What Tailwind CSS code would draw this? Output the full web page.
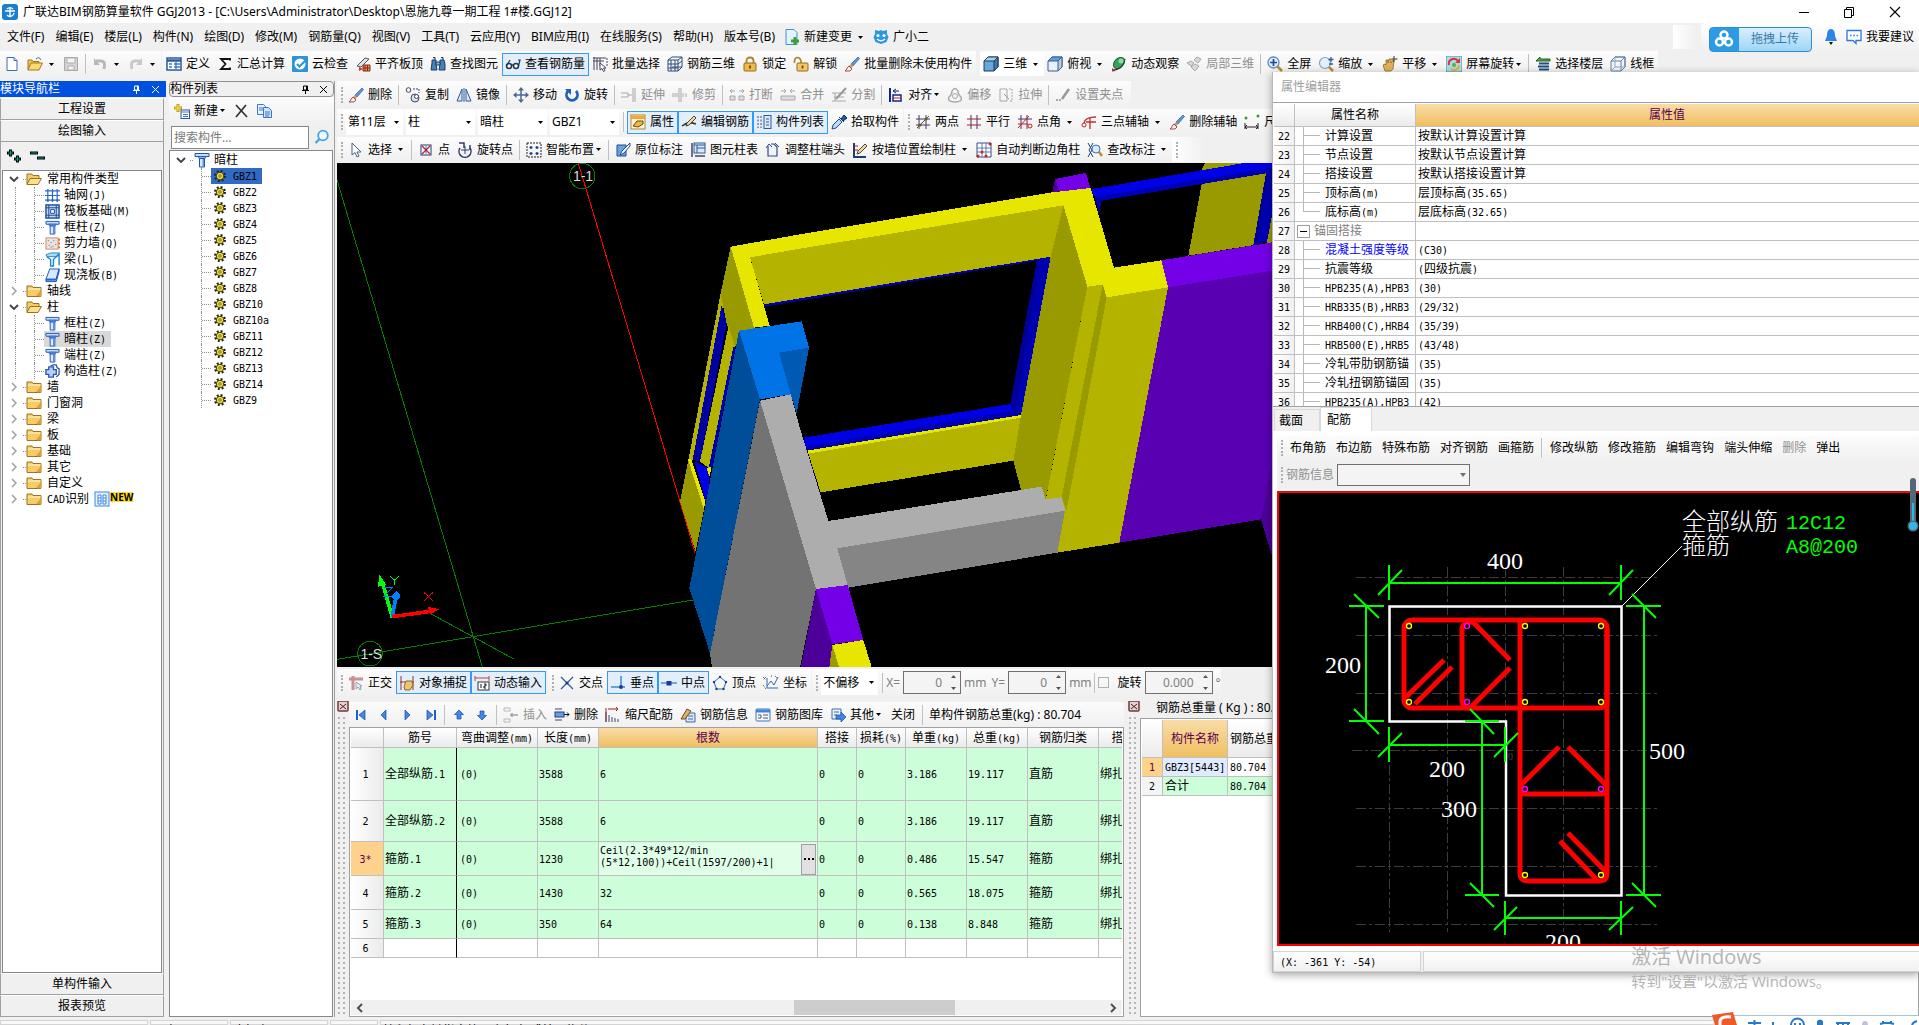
<!DOCTYPE html>
<html lang="zh-CN">
<head>
<meta charset="utf-8">
<title>广联达BIM钢筋算量软件 GGJ2013</title>
<script src="https://cdn.jsdelivr.net/npm/@tailwindcss/browser@4"></script>
</head>
<body class="h-screen overflow-hidden bg-[#f0f0f0] font-[family-name:'Noto_Sans','Noto_Sans_CJK_SC',sans-serif] text-xs text-black">
<div class="relative flex h-full w-full flex-col overflow-hidden">

  <!-- title bar -->
  <header class="flex h-[23px] shrink-0 items-center bg-white pl-[2px]">
    <svg class="size-4 shrink-0" viewBox="0 0 16 16"><rect width="16" height="16" rx="3" fill="#1a7fd0"/><path d="M8 3v10M3 7h10M5 5a4 4 0 0 1 6 0M5 11a4 4 0 0 0 7-2" fill="none" stroke="#fff" stroke-width="1.4"/></svg>
    <h1 class="ml-[5px] whitespace-nowrap">广联达BIM钢筋算量软件 GGJ2013 - [C:\Users\Administrator\Desktop\恩施九尊一期工程 1#楼.GGJ12]</h1>
    <div class="ml-auto flex h-full items-center">
      <button aria-label="最小化" class="grid w-[45px] place-items-center"><svg class="size-3" viewBox="0 0 12 12"><path d="M1 6.5h10" stroke="#000"/></svg></button>
      <button aria-label="还原" class="grid w-[45px] place-items-center"><svg class="size-3" viewBox="0 0 12 12" fill="none" stroke="#000"><path d="M1.5 3.5h7v8h-7zM3.500 3.500v-2h7v8h-2"/></svg></button>
      <button aria-label="关闭" class="grid w-[48px] place-items-center"><svg class="size-3" viewBox="0 0 12 12"><path d="M1 1l10 10M11 1L1 11" stroke="#000" stroke-width="1.100"/></svg></button>
    </div>
  </header>

  <!-- menu -->
  <nav class="flex h-7 shrink-0 items-center whitespace-nowrap pl-[2px]">
    <div id="menu" class="flex items-center gap-px"></div>
    <div class="ml-auto flex h-full items-center">
      <div class="mr-[4px] h-6 w-6 bg-linear-to-r from-white to-[#f0f0f0]"></div>
      <div class="flex h-full items-center rounded-l-sm bg-linear-to-b from-white to-[#f0f0f0] pl-2 pr-[5px]">
        <button class="relative z-10 mt-1 flex h-[25px] w-[103px] items-center rounded-sm border border-[#2f8fd0] bg-linear-to-b from-[#d8effc] to-[#9fd5f7] text-[#3a78a8]">
          <span class="grid h-full w-[29px] place-items-center bg-[#2a9be4]"><svg class="size-5" viewBox="0 0 20 20" fill="none" stroke="#fff" stroke-width="2.500"><circle cx="10" cy="6" r="3.500"/><circle cx="5.500" cy="13" r="3.500"/><circle cx="14.500" cy="13" r="3.500"/></svg></span>
          <span class="flex-1 text-center">拖拽上传</span>
        </button>
        <svg class="ml-[11px] h-[18px] w-4" viewBox="0 0 16 18"><path d="M8 1C4.500 1 4 5 4 8l-2 5h12l-2-5c0-3-.5-7-4-7z" fill="#2a86e8"/><path d="M6 14h4l-2 3z" fill="#111"/></svg>
        <svg class="ml-[7px] size-4" viewBox="0 0 16 16"><path d="M1 1.500h14v10h-5v3l-3-3H1z" fill="#fff" stroke="#2a78d8" stroke-width="1.300"/><path d="M4 6.500h1.500M7.300 6.500h1.500M10.600 6.500h1.500" stroke="#2a78d8" stroke-width="1.500"/></svg>
        <a href="#" class="ml-1">我要建议</a>
      </div>
    </div>
  </nav>

  <!-- main toolbar -->
  <div class="mb-1 flex h-[26px] shrink-0 items-center whitespace-nowrap">
    <div id="tbFile" class="flex h-full items-center bg-linear-to-b from-[#fcfcfc] to-[#f0f0f0] pl-px"></div>
    <div id="tbMain" class="ml-px flex h-full items-center bg-linear-to-b from-[#fcfcfc] to-[#f0f0f0] pl-px"></div>
    <div id="tbView" class="ml-1 flex h-full items-center bg-linear-to-b from-[#fcfcfc] to-[#f0f0f0]"></div>
  </div>

  <main class="flex min-h-0 flex-1 pb-[3px]">

    <!-- module navigation -->
    <aside class="song mr-[2px] flex w-[164px] shrink-0 flex-col">
      <div class="flex h-4 w-[166px] items-center bg-[#0050e0] pr-[6px] text-white">
        <h2>模块导航栏</h2>
        <svg class="ml-auto size-[9px]" viewBox="0 0 9 9"><path d="M2.500 1h4v4h-4zM1 5.500h7M4.500 5.500v3.500M5.500 1v4" fill="none" stroke="#fff"/></svg>
        <svg class="ml-[10px] size-[9px]" viewBox="0 0 9 9"><path d="M1 1l7 7M8 1l-7 7" stroke="#fff"/></svg>
      </div>
      <button class="mt-px h-[22px] border border-[#a0a0a0] border-t-white">工程设置</button>
      <button class="h-[22px] border border-[#a0a0a0] border-t-white">绘图输入</button>
      <div class="flex min-h-0 flex-1 flex-col border-x border-[#a0a0a0] px-px">
        <div class="flex h-7 shrink-0 items-center gap-2 pl-1">
          <button aria-label="展开"><svg class="size-4" viewBox="0 0 16 16"><path d="M1 5h7M4.500 1.500v7M8 11h7M11.500 7.500v7" stroke="#000" stroke-width="3"/><path d="M2 5h5M4.500 2.500v5M9 11h5M11.500 8.500v5" stroke="#0a9a8a"/></svg></button>
          <button aria-label="折叠"><svg class="size-4" viewBox="0 0 16 16"><path d="M0 5h8M7 10h8" stroke="#000" stroke-width="3"/><path d="M1 5h6M8 10h6" stroke="#0a9a8a"/></svg></button>
        </div>
        <ul id="navTree" class="min-h-0 flex-1 overflow-hidden border border-[#828790] bg-white"></ul>
      </div>
      <button class="h-[22px] shrink-0 border border-[#a0a0a0] border-t-white">单构件输入</button>
      <button class="h-[22px] shrink-0 border border-[#a0a0a0] border-t-white">报表预览</button>
    </aside>

    <!-- component list -->
    <aside class="song mr-[2px] flex w-[169px] shrink-0 flex-col border-r border-[#a0a0a0] pl-[3px]">
      <div class="flex h-4 shrink-0 items-center rounded-sm border border-[#909090] pr-[5px]">
        <h2>构件列表</h2>
        <svg class="ml-auto size-[9px]" viewBox="0 0 9 9"><path d="M2.500 1h4v4h-4zM1 5.500h7M4.500 5.500v3.500M5.500 1v4" fill="none" stroke="#000"/></svg>
        <svg class="ml-[9px] size-[9px]" viewBox="0 0 9 9"><path d="M1 1l7 7M8 1l-7 7" stroke="#000"/></svg>
      </div>
      <div class="flex h-[27px] shrink-0 items-center bg-linear-to-b from-[#fcfcfc] to-[#f0f0f0] pl-[2px]" id="tbList"></div>
      <div class="flex h-[26px] shrink-0 items-center pl-[2px]">
        <input aria-label="搜索构件" placeholder="搜索构件…" class="h-[23px] w-[138px] border border-[#828790] bg-white px-[2px] placeholder:text-[#7a7a7a]">
        <button aria-label="搜索" class="ml-[5px]"><svg class="size-4" viewBox="0 0 16 16"><circle cx="9" cy="6.500" r="4.800" fill="#eef8ff" stroke="#4aa3df" stroke-width="1.800"/><path d="M5.500 10L1.500 14" stroke="#4aa3df" stroke-width="2.400"/></svg></button>
      </div>
      <ul id="listTree" class="mr-px min-h-0 flex-1 overflow-hidden border border-[#828790] bg-white pt-px"></ul>
    </aside>

    <section class="flex min-w-0 flex-1 flex-col">
      <div class="flex h-[27px] shrink-0 items-center whitespace-nowrap">
        <div id="tbEdit" class="flex h-full items-center bg-linear-to-b from-[#fcfcfc] to-[#f0f0f0] pr-1"></div>
      </div>
      <div class="flex h-7 shrink-0 items-center whitespace-nowrap">
        <div class="flex h-[26px] items-center bg-linear-to-b from-[#fcfcfc] to-[#f0f0f0]">
          <div id="combos" class="flex items-center"></div>
          <div id="tbPanels" class="flex items-center"></div>
        </div>
        <div id="tbAxis" class="ml-px flex h-[26px] items-center bg-linear-to-b from-[#fcfcfc] to-[#f0f0f0]"></div>
      </div>
      <div class="flex h-[27px] shrink-0 items-center whitespace-nowrap">
        <div id="tbDraw" class="flex h-[25px] items-center bg-linear-to-b from-[#fcfcfc] to-[#f0f0f0]"></div>
        <div id="tbEmpty" class="flex h-[25px] w-8 items-center bg-linear-to-r from-white to-[#f0f0f0]"></div>
      </div>

      <!-- 3D view -->
      <div class="min-h-0 flex-1 bg-black">
        <svg class="h-full w-[935px]" viewBox="0 0 2805 1512" preserveAspectRatio="xMinYMin meet" shape-rendering="crispEdges">
          <rect width="2805" height="1512" fill="#000"/>
          <g transform="translate(-21 -9)" fill="none" stroke="#008000" stroke-width="3">
            <path d="M21 60L457 1521M21 1498L1088 1320M300 1360L553 1498"/>
            <circle cx="757" cy="48" r="38"/><circle cx="120" cy="1481" r="37"/>
            <path d="M745 10L1050 1025L1095 1178" stroke="#f00"/>
          </g>
          <g transform="translate(-21 -9)" font-family="Liberation Sans" font-size="42" fill="#ddd" text-anchor="middle" shape-rendering="auto">
            <text x="759" y="62">1-1</text><text x="124" y="1496">1-S</text>
          </g>
          <g transform="translate(1389 -9)">
            <path fill="#990" d="M1215 10H1330L1205 72V30zM1205 72L1398 40L1362 255L1165 287z"/>
            <path fill="#0000b3" d="M885 112L1416 22V200L1400 245L1360 255L1398 40L905 122L896 160z"/>
            <path fill="#009" d="M1398 40L1410 38L1372 255H1360z"/>
            <path fill="#0000e6" d="M872 88L1327 10H1416V22L885 112z"/>
            <path fill="#990" d="M1416 165V250L1400 252z"/>
            <path fill="#4d0099" d="M765 57L780 97H757z"/>
            <path fill="#7300e6" d="M765 57L858 39L871 84L780 100z"/>
            <path fill="#b3b300" d="M-150 292L0 266L790 136L752 290L0 415L-107 437z"/>
            <path fill="#0000b3" d="M-107 433L752 290L663 767L22 872L18 860L632 734L710 302L-107 440z"/>
            <path fill="#009" d="M710 302L722 300L645 755L630 735z"/>
            <path fill="#0000e6" d="M10 833L632 732L636 752L18 860z"/>
            <path fill="#b3b300" d="M25 881L663 773L640 902L62 997z"/>
            <path fill="#e6e600" d="M22 872L663 765V773L25 881z"/>
            <path fill="#990" d="M790 136L862 380L737 1018L663 990L640 902L663 765L752 290z"/>
            <path fill="#b3b300" d="M862 380L908 374L920 412L1104 382L958 1148L772 1178L795 1050L737 1020z"/>
            <path fill="#990" d="M908 374L920 412L800 1050L785 1012z"/>
            <path fill="#5900b3" d="M1104 382L1416 332V915L1383 1078L958 1148z"/>
            <path fill="#7300e6" d="M1084 301L1416 247V332L1104 382z"/>
            <path fill="#4d0099" d="M1416 915L1383 1078L1416 1188z"/>
            <path fill="#e6e600" d="M-208 260L0 223L757 97L872 84L942 323L1084 301L1104 382L920 412L908 374L862 380L790 136L0 266L-150 292L-91 497L-138 503z"/>
          </g>
          <g transform="translate(-21 -9)">
            <path fill="#990" d="M1202 260L1272 503L1215 560L1190 490L1172 400z"/>
            <path fill="#b3b300" d="M1172 400L1180 440L1088 900H1075zM1195 500L1215 560L1138 925L1110 905z"/>
            <path fill="#0000b3" d="M1175 435L1190 490L1110 905L1088 900zM1210 560H1217L1146 925H1136z"/>
            <path fill="#009" d="M1176 470L1184 480L1102 900H1088z"/>
            <path fill="#990" d="M1075 900L1122 1048L1097 1175L1050 1025z"/>
            <path fill="#0000e6" d="M1094 905L1138 925V980L1126 1024z"/>
            <path fill="#e6e600" d="M1073 896H1083L1126 1025L1122 1048zM1130 925L1145 920L1138 950z"/>
            <path fill="#004d99" d="M1227 512L1290 718L1140 1480L1078 1285z"/>
            <path fill="#0059b3" d="M1347 578L1437 563L1400 760L1382 703z"/>
            <path fill="#0073e6" d="M1227 512L1415 484L1437 563L1347 578L1382 703L1290 718z"/>
          </g>
          <g transform="translate(1389 -9)">
            <path fill="#737373" d="M-120 722L48 1287L0 1521H-264L-270 1480z"/>
            <path fill="#adadad" d="M-120 722L-28 703L0 805L85 1083L725 980L737 1018L785 1012L795 1052L112 1165L145 1275L48 1287z"/>
            <path fill="#858585" d="M112 1165L795 1052L772 1178L145 1283z"/>
            <path fill="#4d0099" d="M48 1287L97 1453L88 1521H3z"/>
            <path fill="#990" d="M97 1455L118 1521H88z"/>
            <path fill="#7300e6" d="M48 1287L143 1275L190 1440L97 1453z"/>
            <path fill="#e6e600" d="M97 1455L190 1440L215 1521H117z"/>
          </g>
          <g transform="translate(-21 -9)" fill="none">
            <path d="M187 1372L158 1270" stroke="#0f0" stroke-width="11"/><path d="M148 1244L144 1280L168 1274z" fill="#0f0"/>
            <path d="M187 1370L198 1310" stroke="#007fff" stroke-width="11"/><path d="M198 1293l12 10-2 14-12 4-12-10z" fill="#007fff"/>
            <path d="M187 1370L300 1354" stroke="#f00" stroke-width="11"/><path d="M327 1348L294 1340L300 1364z" fill="#f00"/>
            <path d="M180 1248l13 13 14-13M193 1261v14" stroke="#0f0" stroke-width="3"/>
            <path d="M162 1282h26l-26 27h36" stroke="#007fff" stroke-width="3"/>
            <path d="M282 1297l27 26M309 1297l-27 26" stroke="#f00" stroke-width="3"/>
          </g>
        </svg>
      </div>

      <!-- snap bar -->
      <div class="flex h-[31px] shrink-0 items-center whitespace-nowrap">
        <div id="tbSnap1" class="flex h-7 items-center bg-linear-to-b from-[#fcfcfc] to-[#f0f0f0]"></div>
        <div id="tbSnap2" class="ml-[2px] flex h-7 items-center bg-linear-to-b from-[#fcfcfc] to-[#f0f0f0]"></div>
        <div class="ml-px flex h-7 items-center bg-linear-to-b from-[#fcfcfc] to-[#f0f0f0] text-[#808080]" id="offsets"></div>
      </div>

      <!-- docks -->
      <div class="flex h-[319px] shrink-0">
        <div class="w-3 shrink-0 pt-[3px]" data-grip></div>
        <section class="flex w-[775px] shrink-0 flex-col border-b border-[#a0a0a0] pt-1">
          <div id="tbBars" class="flex h-[25px] shrink-0 items-center whitespace-nowrap bg-linear-to-b from-[#fcfcfc] to-[#f0f0f0] pl-px"></div>
          <div class="song flex min-h-0 flex-1 flex-col overflow-hidden border-x border-t border-[#a0a0a0] bg-white px-px">
            <div class="min-h-0 flex-1 overflow-hidden">
              <table class="w-[822px] table-fixed border-separate border-spacing-0 whitespace-nowrap">
                <colgroup><col class="w-[33px]"><col class="w-[73px]"><col class="w-[81px]"><col class="w-[61px]"><col class="w-[219px]"><col class="w-[39px]"><col class="w-[49px]"><col class="w-[61px]"><col class="w-[61px]"><col class="w-[71px]"><col class="w-[74px]"></colgroup>
                <thead><tr id="barHead"></tr></thead>
                <tbody id="barBody"></tbody>
              </table>
            </div>
            <div class="mb-px flex h-[15px] shrink-0 items-center bg-[#f0f0f0] px-1">
              <svg class="size-[10px]" viewBox="0 0 10 10"><path d="M7 1L3 5l4 4" fill="none" stroke="#505050" stroke-width="2"/></svg>
              <div class="ml-[429px] h-full w-[161px] bg-[#cdcdcd]"></div>
              <svg class="ml-auto size-[10px]" viewBox="0 0 10 10"><path d="M3 1l4 4-4 4" fill="none" stroke="#505050" stroke-width="2"/></svg>
            </div>
          </div>
        </section>
        <div class="ml-1 w-3 shrink-0 pt-[3px]" data-grip></div>
        <section class="flex min-w-0 flex-1 flex-col border-b border-[#a0a0a0]">
          <h2 class="flex h-5 shrink-0 items-center pl-4">钢筋总重量 ( Kg ) : 80.704</h2>
          <div class="song min-h-0 flex-1 overflow-hidden border-x border-t border-[#a0a0a0] bg-white p-px">
            <table class="table-fixed border-separate border-spacing-0 whitespace-nowrap">
              <thead><tr class="h-[38px]">
                <th class="w-[21px] border-b border-r border-[#c0c0c0] bg-linear-to-b from-white to-[#ebebeb]"></th>
                <th class="w-[65px] border-b border-r border-[#c0c0c0] bg-linear-to-b from-[#f9dca6] to-[#f0bf5f] font-normal text-[#5a0050]">构件名称</th>
                <th class="w-[80px] border-b border-r border-[#c0c0c0] bg-linear-to-b from-white to-[#ebebeb] pl-[2px] text-left font-normal">钢筋总重量</th></tr></thead>
              <tbody>
                <tr class="h-[19px]"><th class="border-b border-r border-[#c0c0c0] bg-[#ffd28c] font-normal text-[#5a0050]">1</th><td class="border-b border-r border-[#c0c0c0] bg-[#dfecff] pl-[2px]">GBZ3[5443]</td><td class="border-b border-r border-[#c0c0c0] pl-[2px]">80.704</td></tr>
                <tr class="h-[19px]"><th class="border-b border-r border-[#c0c0c0] bg-[#f4f4f4] font-normal">2</th><td class="border-b border-r border-[#c0c0c0] bg-[#ccffd9] pl-[2px]">合计</td><td class="border-b border-r border-[#c0c0c0] bg-[#ccffd9] pl-[2px]">80.704</td></tr>
              </tbody>
            </table>
          </div>
        </section>
      </div>
    </section>
  </main>

  <!-- status bar -->
  <footer class="flex h-[5px] shrink-0 gap-[2px] overflow-hidden whitespace-nowrap leading-5">
    <div class="w-[148px] border border-[#d4d4d4] bg-[#f8f8f8]"></div>
    <div class="w-[78px] border border-[#d4d4d4] bg-[#f8f8f8] pl-[2px]">层高:2.9m</div>
    <div class="w-[98px] border border-[#d4d4d4] bg-[#f8f8f8] pl-[2px]">底标高:32.65m</div>
    <div class="w-[48px] border border-[#d4d4d4] bg-[#f8f8f8] pl-[2px]">0</div>
    <div class="flex-1 border border-[#d4d4d4] bg-[#f8f8f8] pl-[2px]">按鼠标左键指定第一个角点,或拾取构件图元</div>
  </footer>

  <!-- floating property editor -->
  <section class="absolute right-0 top-[72px] z-20 flex h-[901px] w-[647px] flex-col border-b border-l border-[#b8b8b8] bg-white shadow-[0_2px_8px_rgba(0,0,0,0.35)]">
    <h2 class="flex h-[30px] shrink-0 items-center pl-2 text-[#a0a0a0]">属性编辑器</h2>
    <div class="song h-[305px] shrink-0 overflow-hidden border-y border-[#a0a0a8] pl-px pt-px">
      <table class="w-full table-fixed border-separate border-spacing-0 whitespace-nowrap">
        <colgroup><col class="w-[21px]"><col class="w-[121px]"><col></colgroup>
        <thead><tr class="h-[23px]"><th class="border-b border-r border-[#c0c0c0] bg-linear-to-b from-white to-[#ebebeb]"></th><th class="border-b border-r border-[#c0c0c0] bg-linear-to-b from-white to-[#ebebeb] font-normal">属性名称</th><th class="border-b border-[#c0c0c0] bg-linear-to-b from-[#f9dca6] to-[#f0bf5f] pr-[1px] font-normal text-[#5a0050]">属性值</th></tr></thead>
        <tbody id="propBody"></tbody>
      </table>
    </div>
    <div class="flex h-[24px] shrink-0 items-end bg-[#f0f0f0] pl-px">
      <button class="h-[22px] w-[46px] border border-b-0 border-[#d9d9d9] pl-1 text-left">截面</button>
      <button class="h-[24px] w-[52px] border border-b-0 border-[#d9d9d9] bg-white pl-[6px] text-left">配筋</button>
    </div>
    <div class="flex min-h-0 flex-1 flex-col pl-1 pt-1">
      <div id="tbSect" class="flex h-[26px] shrink-0 items-center whitespace-nowrap bg-linear-to-b from-[#fcfcfc] to-[#f0f0f0]"></div>
      <div class="mb-[2px] flex h-7 shrink-0 items-center bg-[#f0f0f0]">
        <span class="ml-1 mr-[3px] h-4 border-l-2 border-dotted border-[#b0b0b0]"></span>
        <label for="barInfo" class="text-[#909090]">钢筋信息</label>
        <div class="relative ml-[3px] h-[22px] w-[133px]">
          <select id="barInfo" class="h-full w-full appearance-none border border-[#707070] bg-[#f4f4f4]"><option></option></select>
          <svg class="absolute right-1 top-[9px] h-[4px] w-[6px]" viewBox="0 0 6 4"><path d="M0 0h6L3 4z" fill="#707070"/></svg>
        </div>
      </div>
      <div class="min-h-0 flex-1 overflow-hidden border-y-2 border-l-2 border-[#f00] bg-black">
        <svg class="block h-[452px] w-[640px]" viewBox="1279 493 640 452">
          <g stroke="#3c3c3c" fill="none" stroke-dasharray="10 3 3 3">
            <path d="M1389.500 727V932M1447.500 567V932M1505.500 567V721M1563.500 567V932M1356 577.500H1659M1356 635.500H1659M1356 693.500H1659M1352 750.500H1655M1356 808.500H1659M1356 866.500H1659M1356 924.500H1659"/>
          </g>
          <path d="M1389.500 606.500H1621.500V895.500H1506V721.500H1389.500z" fill="none" stroke="#fff" stroke-width="2.500"/>
          <path d="M1622 606L1682 546" stroke="#fff"/>
          <g fill="none" stroke="red" stroke-width="5" stroke-linejoin="round">
            <rect x="1404" y="620" width="203" height="88" rx="8"/>
            <path d="M1520 620V873q0 8 8 8H1599q8 0 8-8V628M1520 789q0 5 5 5H1602q5 0 5-5M1473 622q-11 0-11 8V700q0 8 8 8"/>
            <path d="M1471 620L1510 660M1510 668L1471 707M1406 697L1444 660M1415 704L1452 667M1521 785L1559 747M1568 747L1606 785M1568 833L1606 872M1560 841L1597 880"/>
          </g>
          <g fill="none" stroke="#0f0" stroke-width="2">
            <path d="M1389 583H1621M1389 565V600M1621 565V600M1378 595L1402 570M1609 595L1633 570"/>
            <path d="M1366 606V721M1349 606H1384M1349 721H1384M1354 594L1379 618M1354 709L1379 734"/>
            <path d="M1644 606V895M1626 606H1661M1626 895H1661M1632 594L1656 618M1632 883L1656 907"/>
            <path d="M1389 745H1505M1389 727V762M1505 727V762M1378 757L1402 733M1494 757L1518 733"/>
            <path d="M1482 721V895M1465 721H1499M1465 895H1499M1470 709L1494 734M1470 883L1494 907"/>
            <path d="M1505 918H1621M1505 901V935M1621 901V935M1494 930L1517 907M1609 930L1633 907"/>
          </g>
          <g fill="#000" stroke="#ff0" stroke-width="1.300"><circle cx="1409" cy="626" r="2.500"/><circle cx="1525" cy="626" r="2.500"/><circle cx="1601" cy="626" r="2.500"/><circle cx="1409" cy="702" r="2.500"/><circle cx="1525" cy="702" r="2.500"/><circle cx="1601" cy="702" r="2.500"/><circle cx="1525" cy="875" r="2.500"/><circle cx="1601" cy="875" r="2.500"/></g>
          <g fill="#000" stroke="#f0f" stroke-width="1.300"><circle cx="1467" cy="626" r="2.500"/><circle cx="1467" cy="702" r="2.500"/><circle cx="1525" cy="789" r="2.500"/><circle cx="1601" cy="789" r="2.500"/></g>
          <g fill="#fff" font-family="Liberation Serif" font-size="24" text-anchor="middle"><text x="1505" y="569">400</text><text x="1343" y="673">200</text><text x="1667" y="759">500</text><text x="1447" y="777">200</text><text x="1459" y="817">300</text><text x="1563" y="950">200</text></g>
          <text x="1508" y="760" fill="#444" font-size="10" font-family="Liberation Serif">0</text>
          <g fill="#fff" font-family="Noto Sans CJK SC" font-weight="300" font-size="24"><text x="1682" y="530">全部纵筋</text><text x="1682" y="554">箍筋</text></g>
          <g fill="#0f0" font-family="Liberation Mono" font-size="20"><text x="1786" y="529">12C12</text><text x="1786" y="553">A8@200</text></g>
        </svg>
      </div>
    </div>
    <div class="song mt-[5px] flex h-[21px] shrink-0 gap-[2px] bg-[#f0f0f0]">
      <div class="flex w-[148px] items-center border border-[#d4d4d4] bg-linear-to-b from-white to-[#f0f0f0] pl-[6px]"><span>(X: -361 Y: -54)</span></div>
      <div class="flex-1 border border-r-0 border-[#d4d4d4] bg-linear-to-b from-white to-[#f0f0f0]"></div>
    </div>
    <svg class="absolute right-0 top-[405px] h-[56px] w-3" viewBox="0 0 12 56"><rect x="3" y="1" width="6" height="50" rx="3" fill="#53697a"/><path d="M6 26V48" stroke="#35b4e8" stroke-width="2"/><circle cx="6" cy="49" r="5.500" fill="#53697a"/><circle cx="6" cy="49" r="4" fill="#35b4e8"/></svg>
  </section>

  <!-- activation notice -->
  <div class="pointer-events-none absolute bottom-8 left-[85%] z-30 whitespace-nowrap font-[family-name:'Open_Sans','Noto_Sans_CJK_SC',sans-serif] text-[#b4b4b4]">
    <p class="text-xl leading-6">激活 Windows</p>
    <p class="text-[15px] leading-6">转到"设置"以激活 Windows。</p>
  </div>

  <!-- input method bar -->
  <svg class="absolute bottom-0 right-0 z-30 h-[13px] w-[208px]" viewBox="0 0 208 13">
    <path d="M20 4H208V13H20z" fill="#fff"/><path d="M20 3.500H208" stroke="#a8c4dc"/>
    <path d="M1 3L22 0L26 13H4z" fill="#f05a28"/><path d="M20 5q-10-1-11 4v4" fill="none" stroke="#fff" stroke-width="3"/>
    <g stroke="#2a78c8" stroke-width="2" fill="none"><path d="M37 11H50M43.500 8V13M62 10v3M80 13a6 6 0 0 1 13 0M84 11v2M89 11v2" /><path d="M125 11H139M127 11v2M132 11v2M137 11v2M169 12l4-1h6l4 1M172 9v3M180 9v3M201 13q1-3 5-4"/></g>
    <path d="M151 13q0-4 3-4t3 4z" fill="#b8c4d8"/><path d="M106 13V9q3-3 6 0v4z" fill="#2a78c8"/>
  </svg>
</div>

<script>
// 16x16 glyphs
const brush='<path d="M14 1l1.500 1.500L9 10 7 8z" fill="#5a9ad0" stroke="#2b5c9b" stroke-width=".7"/><path d="M7 8l2 2-2 3-3-2z" fill="#c8a060"/><path d="M5 10l3 3-2 2H1c2-1 2-4 4-5z" fill="#e8eef4" stroke="#a02020" stroke-width=".8"/>';
const pencil='<path d="M13 2l2 2-7 7-3 1 1-3z" fill="#f4d890" stroke="#333" stroke-width=".9"/>';
const magnify='<circle cx="6.500" cy="6.500" r="5.500" fill="#dcefff" stroke="#6088b8" stroke-width="1.300"/><path d="M10.500 10.500l4.500 4.500" stroke="#c08a30" stroke-width="2.500"/>';
const colIcon='<path d="M1 1.500h14v3H1z" fill="#c4dcff" stroke="#1c54b8"/><path d="M4 4.500h8l-1 2H5z" fill="#8ab4f0" stroke="#1c54b8" stroke-width=".8"/><path d="M5.500 6.500h5V15h-5z" fill="#dceaff" stroke="#1c54b8"/><path d="M9.300 7v8" stroke="#5a90e0" stroke-width="1.500"/>';
const cube=(a,b,c,s)=>`<path d="M1 5l4-4h10v10l-4 4H1z" fill="${a}" stroke="${s}"/><path d="M1 5l4-4h10l-4 4z" fill="${b}" stroke="${s}"/><path d="M11 5v10l4-4V1z" fill="${c}" stroke="${s}"/>`;
const I={
 doc:'<path d="M3 1.500h7l3 3v10H3z" fill="#fff" stroke="#3c6ea8"/><path d="M10 1.500v3h3" fill="#cfe2f8" stroke="#3c6ea8"/>',
 open:'<path d="M1 14V4h4l1 1.500h6V8" fill="#f0c050" stroke="#a87818"/><path d="M1 14l3-7h11.500L12 14z" fill="#fbd878" stroke="#a87818"/><path d="M9 3q3-3 5 1" fill="none" stroke="#2a6ab8"/>',
 save:'<path d="M1.500 1.500h13v13h-13z" fill="#d4d4d4" stroke="#a8a8a8"/><path d="M4 2h8v5H4zM5 10h6v4H5z" fill="#f4f4f4" stroke="#b0b0b0"/>',
 undo:'<path d="M4 5h5q5 0 3 8" fill="none" stroke="#b8b8b8" stroke-width="3"/><path d="M2 2v7h6z" fill="#b8b8b8"/>',
 redo:'<path d="M12 5H7q-5 0-3 8" fill="none" stroke="#c8c8c8" stroke-width="3"/><path d="M14 2v7H8z" fill="#c8c8c8"/>',
 define:'<rect x="1" y="2" width="14" height="12" fill="#fff" stroke="#2b5c9b" stroke-width="1.500"/><path d="M1 4.500h14" stroke="#2b5c9b" stroke-width="2.500"/><path d="M3 8h3M3 11h3M8 8h6M8 11h6M10 6v7" stroke="#3c78c8" stroke-width="1.300"/>',
 sigma:'<path d="M13 4.500V3H4l4.500 5L4 13h9v-1.500" fill="none" stroke="#111" stroke-width="1.800"/>',
 check:'<rect width="16" height="16" rx="1" fill="#2a94d8"/><circle cx="8" cy="8" r="5.500" fill="#fff"/><path d="M5 8l2.500 2.500L13 5" fill="none" stroke="#2a94d8" stroke-width="2"/>',
 slab:'<path d="M8 9h7v6H8z" fill="#d8a060" stroke="#803010"/><path d="M2 10l8-8 4 1-8 8z" fill="#d8e4ee" stroke="#555"/><path d="M4 11v4l4-2" fill="#e03020"/><path d="M10 9v6M12.500 9v6M8 12h7" stroke="#a02010"/>',
 bino:'<path d="M2 4h4v4l1 6H1l1-7zM10 4h4l1 4v6H9l1-6z" fill="#4a80b8" stroke="#1c3c68"/><path d="M6 6h4v3H6zM3 1.500h2V4M11 1.500h2V4" fill="#8ab4d8" stroke="#1c3c68"/>',
 glasses:'<circle cx="4" cy="10" r="2.500" fill="#fff" stroke="#203850" stroke-width="1.500"/><circle cx="11" cy="10" r="2.500" fill="#fff" stroke="#203850" stroke-width="1.500"/><path d="M6.500 9.500q1-1 2 0M1.500 10L5 4M13.500 10l1.500-6h-2" fill="none" stroke="#203850" stroke-width="1.200"/>',
 batch:'<path d="M1 2h11M1 5h11M2 1v13M5 2v12M8 2v8" fill="none" stroke="#446"/><path d="M8 7v7l2-1.500 1.500 3 1.500-1-1.500-2.500H14z" fill="#fff" stroke="#446"/><path d="M12 2h3v9" stroke="#446" fill="none" stroke-dasharray="2 1"/>',
 rebar3:'<path d="M1 4h10v11H1zM5 1h10v10H5M1 4l4-3M11 4l4-3M11 15l4-4M4 4v11M8 4v11M1 8h10M1 12h10M11 8l4-3" fill="none" stroke="#2b4c78"/>',
 lock:'<path d="M4.500 8V5q0-3.500 3.500-3.500T11.500 5v3" fill="none" stroke="#a88430" stroke-width="1.800"/><rect x="2" y="7" width="12" height="8" rx="1" fill="#f0b848" stroke="#986818"/><path d="M8 9.500v3" stroke="#704808" stroke-width="1.800"/>',
 unlock:'<path d="M1.500 7V4.500Q2 1.500 4.500 1.500T8 5v3" fill="none" stroke="#a88430" stroke-width="1.600"/><rect x="4" y="7" width="11" height="8" rx="1" fill="#f4c868" stroke="#986818"/><path d="M9.500 9.500v3" stroke="#704808" stroke-width="1.800"/>',
 brush, cube:cube('#6aa8d8','#a8d0f0','#3c78b0','#1c3c58'), cubeTop:cube('#e8f0fa','#5aa0e0','#b8cce0','#3c5c88'),
 orbit:'<ellipse cx="8" cy="7" rx="6.500" ry="4.500" fill="#38a058" stroke="#186838" transform="rotate(-45 8 7)"/><path d="M2 14q10 0 12-11" fill="none" stroke="#333" stroke-width="1.200"/><circle cx="10" cy="5" r="2.500" fill="#88e0a0"/><path d="M1 12l4 3-4 .5z" fill="#b03020"/>',
 local3:'<path d="M1 7l4-2 3 2-3 3zM8 4l3-3 4 2-3 4zM5 11l4-3 4 2-4 5z" fill="#d8d8d8" stroke="#a8a8a8"/>',
 full:magnify+'<path d="M3 6.500h7M6.500 3v7" stroke="#204890" stroke-width="1.700"/>',
 zoom:'<circle cx="7" cy="7" r="5.500" fill="#e0f0fc" stroke="#88a0b8" stroke-width="1.200"/><path d="M11 11l4 4" stroke="#c08a30" stroke-width="2.500"/><path d="M13 1v5M10.500 3.500h5M11 8h4" stroke="#2b5c9b" stroke-width="1.300"/>',
 pan:'<path d="M3 15L1 9l2-1 1 1V4h2v3l1-4h2v4l2-3 1 1-1 8-2 2z" fill="#e0b060" stroke="#906820" stroke-width=".8"/><path d="M12 0v6M9.500 3h6" stroke="#333"/>',
 rot:'<rect width="16" height="16" fill="#a8dce8" stroke="#4898b8"/><path d="M3 9a5 5 0 0 1 9-4" fill="none" stroke="#e03030" stroke-width="2"/><path d="M14 2v5h-5z" fill="#e03030"/><path d="M13 9a5 5 0 0 1-8 4" fill="none" stroke="#f0b020" stroke-width="2"/><circle cx="8" cy="9" r="2" fill="#58b048"/>',
 floors:'<path d="M1 5l4-4v2h10v2z" fill="#60b050" stroke="#205820"/><path d="M4 7.500h10M3 10.500h11M4 13.500h10" stroke="#1c4c80" stroke-width="2"/>',
 wire:cube('none','none','none','#6080a8')+'<path d="M5 1v10h10M5 11l-4 4" fill="none" stroke="#90a8c8"/>',
 copy2:'<circle cx="3.500" cy="3" r="2.300" fill="none" stroke="#446"/><circle cx="10" cy="11" r="4" fill="#d8e4f0" stroke="#446"/><circle cx="11.500" cy="9.500" r="2" fill="#fff" stroke="#446"/><path d="M8 2h6v4" fill="none" stroke="#446" stroke-dasharray="2 1"/>',
 mirror:'<path d="M6 2v12H1zM10 2v12h5z" fill="#d8e8f8" stroke="#2b5c9b"/><path d="M8 1v14" stroke="#2b5c9b"/>',
 move:'<path d="M8 2v12M2 8h12" stroke="#4a6a98" stroke-width="1.500"/><path d="M8 0l3 3.500H5zM8 16l-3-3.500h6zM0 8l3.500-3v6zM16 8l-3.500 3V5z" fill="#4a6a98"/>',
 rotate:'<path d="M4 4a5.500 5.500 0 1 0 8 0" fill="none" stroke="#2060b8" stroke-width="2.800"/><path d="M1 2h6v6z" fill="#2060b8"/>',
 extend:'<path d="M0 6h7v4H0M7 8h4" fill="none" stroke="#a8a8a8"/><path d="M12 1v14M14 1v14" stroke="#a8a8a8"/>',
 trim:'<path d="M0 7h6M0 9h6M10 7h2M13 7h2M10 9h2M13 9h2" stroke="#a8a8a8"/><path d="M7 1v14M9 1v14" stroke="#a8a8a8"/>',
 brk:'<path d="M1 9h5v4H1zM10 9h5v4h-5z" fill="#ddd" stroke="#a8a8a8"/><path d="M1 4h5M10 4h5M3 2L1 4l2 2M13 2l2 2-2 2" fill="none" stroke="#a8a8a8"/>',
 merge:'<path d="M1 9h14v4H1z" fill="#ddd" stroke="#a8a8a8"/><path d="M1 4h5M10 4h5M4 2l2 2-2 2M12 2l-2 2 2 2" fill="none" stroke="#a8a8a8"/>',
 split:'<path d="M1 6h14M1 14h14M3 10h10M4 6v8" stroke="#a8a8a8"/><path d="M15 1L5 12" stroke="#989898" stroke-width="2"/>',
 align:'<path d="M2 1v14" stroke="#102880" stroke-width="2"/><path d="M5 8h8v6H5z" fill="#fff" stroke="#102880" stroke-width="1.500"/><path d="M5 11h8" stroke="#c02020"/><path d="M5 4h6M8 2L5 4l3 2" fill="none" stroke="#102880"/>',
 offset:'<path d="M5 4q3-5 6 0 0 4 3 6 2 5-6 5t-6-5q3-2 3-6z" fill="none" stroke="#a8a8a8" stroke-width="1.400"/><circle cx="8" cy="9" r="2.500" fill="none" stroke="#a8a8a8"/>',
 stretch:'<path d="M2 2h7v12H2z" fill="none" stroke="#a8a8a8"/><path d="M11 2h3v12h-3" fill="none" stroke="#a8a8a8" stroke-dasharray="2 1"/><path d="M6 7l5 5" stroke="#989898"/>',
 grip:'<path d="M1 13h6" stroke="#a8a8a8" stroke-width="2" stroke-dasharray="2 1"/><path d="M14 2L7 12" stroke="#989898" stroke-width="2.500"/>',
 prop:'<rect x="1" y="1" width="14" height="14" fill="#fdf4d8" stroke="#b08830"/><path d="M1 3.500h14" stroke="#f0a830" stroke-width="3"/><path d="M3 12l4-5h6v3l-5 3z" fill="#f0b848" stroke="#704808"/>',
 editbar:'<path d="M1 12q6-5 14-2" fill="none" stroke="#333" stroke-width="1.500"/>'+pencil,
 list:'<path d="M2 2v12M5 2v12" stroke="#446" stroke-dasharray="2 1.500"/><rect x="8" y="1.500" width="7" height="13" fill="#dce8f8" stroke="#2b5c9b"/><path d="M10 5h3M10 8h3M10 11h3" stroke="#2b5c9b"/>',
 pick:'<path d="M1 15l1-4 6-6 3 3-6 6z" fill="#b8dcf8" stroke="#1c4c88"/><path d="M8 3l5 5M10 5l3-4 3 3-4 3z" fill="#1c5cb0" stroke="#0c2c68"/>',
 ax2:'<path d="M4 1v14M11 1v14M1 5h14M1 11h14" stroke="#4c3068" fill="none"/><path d="M2 14L14 2" stroke="#c02020"/><circle cx="5" cy="11" r="1.500" fill="#207830"/><circle cx="11" cy="5" r="1.500" fill="#207830"/>',
 ax3:'<path d="M5 1v14M11 1v14" stroke="#4c3068"/><path d="M1 5h14M1 11h14" stroke="#a02030"/>',
 ax4:'<path d="M4 1v14M10 1v14M1 5h14" stroke="#4c3068" fill="none"/><path d="M1 14L12 2M1 10h10" stroke="#c02020"/><circle cx="13" cy="12" r="2" fill="none" stroke="#c02020"/>',
 ax5:'<path d="M3 9Q4 3 15 3M5 8h10M9 4v11" fill="none" stroke="#c03030" stroke-width="1.300"/><circle cx="3" cy="11" r="2" fill="#fff" stroke="#c02020"/>',
 dim:'<path d="M1 9v6M14 9v6M1 13h13" stroke="#222"/><path d="M3 11l-2 2 2 2M12 11l2 2-2 2" fill="none" stroke="#222"/><circle cx="2" cy="4" r="1.500" fill="#30a030"/><circle cx="14" cy="2" r="1.500" fill="#30a030"/>',
 arrow:'<path d="M4 1v12l3-2.500 2 4.500 2-1-2-4h4z" fill="#fff" stroke="#446080"/>',
 pt:'<rect x="3" y="3" width="10" height="10" fill="#fff" stroke="#1c3c78"/><path d="M4 4l8 8M12 4l-8 8" stroke="#c02030" stroke-width="1.300"/><path d="M8 4v8" stroke="#1c3c78" stroke-width=".7"/>',
 rotpt:'<path d="M3 6a6 6 0 1 0 10 0" fill="none" stroke="#333c68" stroke-width="1.500"/><path d="M8 4v8M4 8h8" stroke="#333c68"/><path d="M2 1h5v5M13 3v5" fill="none" stroke="#333c68" stroke-width="1.500"/>',
 smart:'<path d="M1 1h14v14H1z" fill="none" stroke="#222" stroke-dasharray="2 1"/><path d="M5 4v3M3.500 5.500h3M11 4v3M9.500 5.500h3M5 10v3M3.500 11.500h3M11 10v3M9.500 11.500h3" stroke="#1c3c78" stroke-width="1.300"/>',
 inplace:'<path d="M2 3h9v11H2z" fill="#6aa4e0" stroke="#1c4c98"/><path d="M15 1L7 9l-2 4 4-2 6-7z" fill="#fff" stroke="#1c4c98"/>',
 ctable:'<rect x="4" y="1" width="11" height="10" fill="#dce8f8" stroke="#2b5c9b"/><path d="M4 3h11M7 3v8M7 6h8" stroke="#2b5c9b"/><path d="M2 1v14M5 14h10" stroke="#446" stroke-width="1.500"/>',
 cend:'<path d="M3 4v10h9V5L9 2H6" fill="#eef4fc" stroke="#334c88" stroke-width="1.200"/><path d="M1 6l3-4 3 3M10 1l4 4" fill="none" stroke="#334c88"/>',
 cwall:'<path d="M2 1v14h12" fill="none" stroke="#1c3c78" stroke-width="2"/><path d="M2 4h4M2 8h4" stroke="#a02020"/>'+pencil,
 cauto:'<path d="M1 1h14v14H1z" fill="#fff" stroke="#334c88"/><path d="M6 1v14M10 1v14M1 6h14M1 10h14" stroke="#5878b8"/><g fill="#d02020"><circle cx="2" cy="14" r="1.500"/><circle cx="6" cy="10" r="1.500"/><circle cx="10" cy="14" r="1.500"/><circle cx="14" cy="2" r="1.500"/></g>',
 cmark:'<path d="M1 1l4 7-4 7M6 1L2 8l4 7" fill="none" stroke="#1c3c78"/><circle cx="9" cy="7" r="4" fill="#d8ecfc" stroke="#4870a8"/><path d="M12 10l3 4" stroke="#c08a30" stroke-width="2.500"/>',
 ortho:'<path d="M1 4h14M5 1v14" stroke="#c89090" stroke-width="3"/><path d="M8 7v7l2-2 2 3 1-1-1-3h2z" fill="#e8f0f8" stroke="#90a0b0"/>',
 snap:'<path d="M2 1v14M14 1v14M1 7h14" stroke="#903030"/><path d="M5 12l2-6h6l1 4-3 5H6z" fill="#ecc46c" stroke="#906820"/>',
 dyn:'<path d="M1 1v5M15 1v5M1 3h14" stroke="#c04040"/><rect x="4" y="7" width="11" height="8" fill="#fff" stroke="#333"/><path d="M7 9v4M10 9h2v2h-2v2h2" fill="none" stroke="#111"/>',
 sx:'<path d="M2 2l12 12M14 2L2 14" stroke="#2b5c9b" stroke-width="1.300"/><circle cx="8" cy="8" r="1.500" fill="#1c3c78"/>',
 sperp:'<path d="M1 12h14" stroke="#3c88d0" stroke-width="1.500"/><path d="M11 1v11" stroke="#3c88d0" stroke-width="1.500"/><circle cx="11" cy="12" r="2" fill="#1c3c98"/>',
 smid:'<path d="M0 8h16" stroke="#5090d0" stroke-width="1.500"/><rect x="5.500" y="6" width="5" height="4.500" fill="#1c3c98"/>',
 svert:'<path d="M8 2l6 5-2.500 7h-7L2 7z" fill="none" stroke="#2b6cb0"/><g fill="#1c3c78"><circle cx="8" cy="2" r="1.200"/><circle cx="14" cy="7" r="1.200"/><circle cx="2" cy="7" r="1.200"/><circle cx="4.500" cy="14" r="1.200"/><circle cx="11.500" cy="14" r="1.200"/></g>',
 scoord:'<path d="M4 3v10h11M4 11l4-5 3 4 4-8" fill="none" stroke="#2b6cb0"/><path d="M0 2l3 3M3 2L0 5M12 1l3 3M0 10l3 4M8 1h2" stroke="#444" stroke-dasharray="1 1"/>',
 first:'<path d="M4 3v10" stroke="#2060d0" stroke-width="2"/><path d="M12 3v10L6 8z" fill="#4088e8" stroke="#1848a8" stroke-width=".7"/>',
 prev:'<path d="M10 3v10L5 8z" fill="#4088e8" stroke="#1848a8" stroke-width=".7"/>',
 next:'<path d="M6 3v10l5-5z" fill="#4088e8" stroke="#1848a8" stroke-width=".7"/>',
 last:'<path d="M13 3v10" stroke="#2060d0" stroke-width="2"/><path d="M5 3v10l6-5z" fill="#4088e8" stroke="#1848a8" stroke-width=".7"/>',
 up:'<path d="M8 3l4.500 4.500h-2.500V12H6V7.500H3.500z" fill="#4088e8" stroke="#1848a8" stroke-width=".7"/>',
 down:'<path d="M8 13l4.500-4.500h-2.500V4H6v4.500H3.500z" fill="#4088e8" stroke="#1848a8" stroke-width=".7"/>',
 ins:'<path d="M1 1h6v3H1zM1 12h6v3H1z" fill="none" stroke="#b8b8b8"/><path d="M7 8h8M9 6v4" stroke="#a0a0a0" stroke-width="1.500"/>',
 del:'<path d="M1 2h7M1 13h7" stroke="#446" /><rect x="1" y="5" width="9" height="5" fill="#6a9ce0" stroke="#1c3c98"/><path d="M10 7.500h5M13 5.500l2 2-2 2" fill="none" stroke="#111"/>',
 scale:'<path d="M1 1v14M3 2h10M11 0l2 2-2 2" fill="none" stroke="#a02020"/><path d="M1 5v10M4 8v7M7 10v5M10 11v4M13 12v3" stroke="#446"/>',
 info:'<path d="M6 6h9v9H6z" fill="#dce8f8" stroke="#3c6ca8"/><path d="M8 9h5M8 12h5" stroke="#3c6ca8"/><path d="M1 12L7 2l4 2-6 8z" fill="#d8b070" stroke="#704818"/>',
 lib:'<rect x="1" y="2" width="14" height="12" rx="1" fill="#f4f8fc" stroke="#3c78b8"/><path d="M1 4h14" stroke="#3c88d8" stroke-width="3"/><path d="M3 8h3v3H3M8 8h5M8 11h5" fill="none" stroke="#556"/>',
 other:'<path d="M2 2h9v10H2z" fill="#eef4fc" stroke="#3c6ca8"/><path d="M4 5h5M4 8h3" stroke="#3c6ca8"/><path d="M6 8h5V5l5 5-5 5v-3H6z" fill="#4088e8" stroke="#1848a8" stroke-width=".7"/>',
 newlist:'<path d="M4 1v8M0 5h8" stroke="#c8a010" stroke-width="3"/><path d="M4 2v6M1 5h6" stroke="#ffe860"/><rect x="7" y="7" width="8.500" height="8.500" fill="#fff" stroke="#2b5c9b"/><path d="M7 9h8M9 11.500h5M9 13.500h5" stroke="#3c78c8"/>',
 xdel:'<path d="M3 2l11 12M13 2L3 14" stroke="#333" stroke-width="1.700"/>',
 copy:'<path d="M1.500 1.500h6l2 2v8h-8z" fill="#e8f2ff" stroke="#3c78c8"/><path d="M3 5h4M3 7h4" stroke="#3c78c8"/><path d="M7.500 4.500h5l3 3v7h-8z" fill="#d0e4ff" stroke="#3c78c8"/><path d="M9 9h5M9 11h5M9 13h4" stroke="#3c78c8"/>',
 newdoc:'<path d="M2 .5h8l3 3v12H2z" fill="#e4f4ff" stroke="#4890c8"/><path d="M11 8v8M7 12h8" stroke="#38a038" stroke-width="3"/>',
 smile:'<path d="M8 1l2 1 4-1v4l1.500 3-2 5L8 15l-5.500-2-2-5L2 5V1l4 1z" fill="#2898e0"/><circle cx="5" cy="6.500" r="1.600" fill="#fff"/><circle cx="11" cy="6.500" r="1.600" fill="#fff"/><path d="M4 10q4 3.500 8 0" fill="none" stroke="#fff" stroke-width="1.300"/>',
 folder:'<path d="M1 13.500V3h5l1 1.500h8v9z" fill="#f4cc68" stroke="#9c7420"/><path d="M2 6h12.500" stroke="#fce8a8" stroke-width="1.500"/><path d="M10 13l5-6v6.500z" fill="#e0a030"/>',
 folderO:'<path d="M1 13.500V3h5l1 1.500h6v3" fill="#f4cc68" stroke="#9c7420"/><path d="M1 13.500l3-6h11.500l-3.500 6z" fill="#fce090" stroke="#9c7420"/>',
 col:colIcon,
 grid:'<path d="M3 1v14M8 1v14M13 1v14M0 3h16M0 8h16M0 13h16" stroke="#2868c8" stroke-width="1.300"/><path d="M2 12h2v2H2zM7 12h2v2H7zM12 12h2v2h-2z" fill="#2868c8"/>',
 raft:'<rect x="1" y="1" width="14" height="14" fill="#b8d4f8" stroke="#1c4c98" stroke-width="1.500"/><path d="M4 1v14M12 1v14M1 4h14M1 12h14" fill="none" stroke="#1c4c98"/><path d="M6 6h4v4H6z" fill="#fff" stroke="#1c4c98"/>',
 wall:'<rect x="1" y="2" width="13" height="12" fill="#e8e4e0" stroke="#d88860"/><path d="M3 5h1M6 7h1M9 5h1M4 10h1M8 11h1M11 9h1M6 12h1" stroke="#555"/><path d="M15 3v11" stroke="#e07030" stroke-width="2" stroke-dasharray="2 2"/>',
 beam:'<path d="M1 3l5-2h9l-2 4H2z" fill="#a8dcf8" stroke="#1c88c8"/><path d="M2 5l4 3v7h3V8l6-6v12" fill="none" stroke="#1c88c8" stroke-width="1.500"/>',
 plate:'<path d="M5 1h10l-3 11H1z" fill="#d8e8ff" stroke="#1c54b8"/><path d="M1 12v2.500h11L15 4V1l-3 11z" fill="#5a90e0" stroke="#1c54b8"/>',
 gz:'<path d="M4 3h5v3h3v5H9v3H4v-3H1V6h3z" fill="#b8d0f8" stroke="#2858a8" stroke-width="1.400"/><path d="M6 2l3-1h3l1 3 2 1v6l-3 3" fill="none" stroke="#2858a8" stroke-width="1.400"/>',
 gear:'<circle cx="8" cy="8" r="6.500" fill="none" stroke="#222" stroke-width="3" stroke-dasharray="2.600 2.500"/><circle cx="8" cy="8" r="5" fill="#ffe800" stroke="#333" stroke-width="1.300"/><circle cx="8" cy="8" r="1.700" fill="#fff" stroke="#333"/>',
 table:'<rect x="1" y="1" width="14" height="14" fill="#e4f0ff" stroke="#3c88d8"/><path d="M4 4h3v9H4zM9 4h3v9H9zM4 7h3M4 10h3M9 7h3M9 10h3" fill="#fff" stroke="#3c88d8"/>'
};
const svg=(n,c='size-4')=>`<svg class="${c} shrink-0" viewBox="0 0 16 16">${I[n]}</svg>`;
const tri='<svg class="h-[3px] w-[5px]" viewBox="0 0 5 3"><path d="M0 0h5L2.500 3z" fill="#000"/></svg>';
const SEP='<span class="ml-[2px] mr-[3px] h-5 w-px shrink-0 bg-[#c0c0c0]"></span>';
const GRIP='<span class="ml-1 mr-[2px] h-4 shrink-0 border-l-2 border-dotted border-[#b0b0b0]"></span>';
// option letters: a active, d disabled, v wide arrow, t tight arrow, w white background
function item(it){
  if(it==='|')return SEP; if(it===':')return GRIP;
  const [ic,txt,o='']=it;
  if(!ic)return `<button class="px-[5px] ${o.includes('d')?'text-[#909090]':''}">${txt}</button>`;
  const cls=['flex h-[23px] shrink-0 items-center border pl-[2px] pr-[3px]',
    o.includes('a')?'border-[#3399ff] bg-[#e3eefb]':'border-transparent',
    o.includes('w')?'bg-white':'', o.includes('d')?'text-[#909090]':''].join(' ');
  const arr=o.includes('v')?`<span class="ml-[6px] mr-[2px]">${tri}</span>`:o.includes('t')?`<span class="ml-[2px] mr-px">${tri}</span>`:'';
  const aria=txt?'':`aria-label="${ic}"`;
  return `<button ${aria} class="${cls}">${svg(ic)}${txt?`<span class="ml-1">${txt}</span>`:''}${arr}</button>`;
}
const fill=(id,items)=>document.getElementById(id).innerHTML=items.map(item).join('');

document.getElementById('menu').innerHTML=
 ['文件(F)','编辑(E)','楼层(L)','构件(N)','绘图(D)','修改(M)','钢筋量(Q)','视图(V)','工具(T)','云应用(Y)','BIM应用(I)','在线服务(S)','帮助(H)','版本号(B)']
 .map(t=>`<button class="px-[5px]">${t}</button>`).join('')+item(['newdoc','新建变更','v'])+item(['smile','广小二']);
fill('tbFile',[['doc',''],['open','','v'],['save',''],'|',['undo','','v'],['redo','','v']]);
fill('tbMain',[['define','定义'],['sigma','汇总计算'],['check','云检查'],['slab','平齐板顶'],['bino','查找图元'],['glasses','查看钢筋量','a'],['batch','批量选择'],['rebar3','钢筋三维'],['lock','锁定'],['unlock','解锁'],['brush','批量删除未使用构件']]);
fill('tbView',[['cube','三维','vw'],['cubeTop','俯视','v'],['orbit','动态观察'],['local3','局部三维','d'],'|',['full','全屏'],['zoom','缩放','v'],['pan','平移','v'],['rot','屏幕旋转','t'],'|',['floors','选择楼层'],['wire','线框']]);
fill('tbList',[['newlist','新建','t'],['xdel',''],['copy','']]);
fill('tbEdit',[':',['brush','删除'],'|',['copy2','复制'],['mirror','镜像'],'|',['move','移动'],['rotate','旋转'],'|',['extend','延伸','d'],['trim','修剪','d'],'|',['brk','打断','d'],['merge','合并','d'],['split','分割','d'],'|',['align','对齐','t'],['offset','偏移','d'],['stretch','拉伸','d'],'|',['grip','设置夹点','d']]);
const combo=(label,v,w)=>`<div class="relative ml-px mr-[2px] h-[25px] ${w}"><select aria-label="${label}" class="h-full w-full appearance-none bg-white px-[2px]"><option>${v}</option></select><span class="pointer-events-none absolute right-1 top-[11px] flex">${tri}</span></div>`;
document.getElementById('combos').innerHTML=GRIP+combo('楼层','第11层','w-[57px]')+combo('构件类型','柱','w-[69px]')+combo('子类型','暗柱','w-[69px]')+combo('构件','GBZ1','w-[69px]')+SEP;
fill('tbPanels',[['prop','属性','a'],['editbar','编辑钢筋','a'],['list','构件列表','a'],['pick','拾取构件']]);
fill('tbAxis',[':',['ax2','两点'],['ax3','平行'],['ax4','点角','v'],['ax5','三点辅轴','v'],['brush','删除辅轴'],['dim','尺寸标注']]);
fill('tbDraw',[':',['arrow','选择','v'],'|',['pt','点'],['rotpt','旋转点'],'|',['smart','智能布置','t'],'|',['inplace','原位标注'],['ctable','图元柱表'],['cend','调整柱端头'],['cwall','按墙位置绘制柱','v'],['cauto','自动判断边角柱'],['cmark','查改标注','v']]);
fill('tbEmpty',[':']);
fill('tbSnap1',[':',['ortho','正交'],['snap','对象捕捉','a'],['dyn','动态输入','a']]);
fill('tbSnap2',[':',['sx','交点'],['sperp','垂点','a'],['smid','中点','a'],['svert','顶点'],['scoord','坐标']]);
const spin=(id,v,w)=>`<span class="relative mx-[3px] h-[23px] ${w}"><input id="${id}" value="${v}" class="h-full w-full border border-[#707070] bg-[#f4f4f4] pr-[18px] text-right"><svg class="absolute right-1 top-1 h-[15px] w-[7px]" viewBox="0 0 7 15"><path d="M1 3h5L3.500 0zM1 12h5l-2.500 3z" fill="#555"/></svg></span>`;
document.getElementById('offsets').innerHTML=GRIP+`<div class="text-black">${combo('偏移方式','不偏移','w-[57px]')}</div>`+SEP+
 `<label for="ox">X=</label>${spin('ox','0','w-[58px]')}<span>mm</span><label for="oy" class="ml-[5px]">Y=</label>${spin('oy','0','w-[58px]')}<span>mm</span>`+SEP+
 `<input type="checkbox" id="rt" class="size-[11px] appearance-none border border-[#b0b0b0]"><label for="rt" class="ml-[9px] text-black">旋转</label>${spin('ang','0.000','w-[68px]')}<label for="ang">°</label>`;
fill('tbBars',[['first',''],['prev',''],['next',''],['last',''],'|',['up',''],['down',''],'|',['ins','插入','d'],['del','删除'],['scale','缩尺配筋'],['info','钢筋信息'],['lib','钢筋图库'],['other','其他','t'],['','关闭'],'|']);
document.getElementById('tbBars').insertAdjacentHTML('beforeend','<span class="ml-[3px]">单构件钢筋总重(kg) : 80.704</span>');
fill('tbSect',[':',['','布角筋'],['','布边筋'],['','特殊布筋'],['','对齐钢筋'],['','画箍筋'],'|',['','修改纵筋'],['','修改箍筋'],['','编辑弯钩'],['','端头伸缩'],['','删除','d'],['','弹出']]);

// trees
const chev=(open)=>open?'<svg class="size-[10px]" viewBox="0 0 10 10"><path d="M1 3l4 4 4-4" fill="none" stroke="#404040" stroke-width="1.800"/></svg>':'<svg class="size-[10px]" viewBox="0 0 10 10"><path d="M3 1l4 4-4 4" fill="none" stroke="#a0a0a0" stroke-width="1.500"/></svg>';
const node=(open,t,extra='')=>`<li class="flex h-4 items-center whitespace-nowrap pl-[6px]">${chev(open)}<span class="ml-1 w-[3px] border-t border-dotted border-[#909090]"></span>${svg(open?'folderO':'folder')}<span class="ml-[5px]">${t}</span>${extra}</li>`;
const leaf=(ic,t,sel)=>`<li class="flex h-4 items-center whitespace-nowrap pl-3"><span class="h-4 border-l border-dotted border-[#909090]"></span><span class="ml-[18px] h-4 border-l border-dotted border-[#909090]"></span><span class="w-[9px] border-t border-dotted border-[#909090]"></span><span class="flex h-4 items-center pr-[5px] pl-px ${sel?'bg-[#d9d9d9]':''}">${svg(ic,'size-[15px]')}<span class="ml-1">${t}</span></span></li>`;
document.getElementById('navTree').innerHTML=node(1,'常用构件类型')+leaf('grid','轴网(J)')+leaf('raft','筏板基础(M)')+leaf('col','框柱(Z)')+leaf('wall','剪力墙(Q)')+leaf('beam','梁(L)')+leaf('plate','现浇板(B)')
 +node(0,'轴线')+node(1,'柱')+leaf('col','框柱(Z)')+leaf('col','暗柱(Z)',1)+leaf('col','端柱(Z)')+leaf('gz','构造柱(Z)')
 +['墙','门窗洞','梁','板','基础','其它','自定义'].map(t=>node(0,t)).join('')
 +node(0,'CAD识别',`<span class="ml-[5px] flex">${svg('table')}</span><b class="mb-1 bg-[#ffe020] text-[10px] leading-[10px]">NEW</b>`);
document.getElementById('listTree').innerHTML=`<li class="flex h-4 items-center pl-[6px]">${chev(1)}<span class="ml-1 mr-px w-[3px] border-t border-dotted border-[#909090]"></span>${svg('col')}<span class="ml-[4px]">暗柱</span></li>`
 +['1','2','3','4','5','6','7','8','10','10a','11','12','13','14','9'].map((n,i)=>`<li class="flex h-4 items-center pl-[31px]"><span class="h-4 border-l border-dotted border-[#909090]"></span><span class="w-[9px] border-t border-dotted border-[#909090]"></span><span class="flex h-4 items-center pl-[3px] pr-[5px] ${i?'':'bg-[#316ac5]'}">${svg('gear','size-3')}<span class="ml-[7px]">GBZ${n}</span></span></li>`).join('');

// bar table
document.getElementById('barHead').innerHTML=['','筋号','弯曲调整(mm)','长度(mm)','根数','搭接','损耗(%)','单重(kg)','总重(kg)','钢筋归类','搭接形式']
 .map((h,i)=>`<th class="h-5 border-b border-r border-[#c0c0c0] p-0 font-normal ${i===4?'bg-linear-to-b from-[#f9dca6] to-[#f0bf5f] text-[#5a0050]':'bg-linear-to-b from-white to-[#ebebeb]'}">${h}</th>`).join('');
const edit='<div class="flex h-full items-start bg-[#dfffe8]"><textarea aria-label="根数" rows="2" class="h-[30px] min-w-0 flex-1 resize-none overflow-hidden bg-transparent pl-px pt-[2px] font-[family-name:\'DejaVu_Sans_Mono\',monospace] text-[10px] leading-3">Ceil(2.3*49*12/min\n(5*12,100))+Ceil(1597/200)+1|</textarea><button aria-label="编辑表达式" class="mr-px mt-px flex h-[31px] w-[15px] items-center justify-center gap-[2px] border border-[#a0a0a0] bg-[#e1e1e1]"><i class="size-[2px] bg-black"></i><i class="size-[2px] bg-black"></i><i class="size-[2px] bg-black"></i></button></div>';
const rows=[
 ['h-[53px]','1','全部纵筋.1','(0)','3588','6','0','0','3.186','19.117','直筋','绑扎'],
 ['h-[41px]','2','全部纵筋.2','(0)','3588','6','0','0','3.186','19.117','直筋','绑扎'],
 ['h-[34px]','3*','箍筋.1','(0)','1230',edit,'0','0','0.486','15.547','箍筋','绑扎'],
 ['h-[34px]','4','箍筋.2','(0)','1430','32','0','0','0.565','18.075','箍筋','绑扎'],
 ['h-[29px]','5','箍筋.3','(0)','350','64','0','0','0.138','8.848','箍筋','绑扎'],
 ['h-[19px]','6','','','','','','','','','','']];
document.getElementById('barBody').innerHTML=rows.map(([h,n,...c])=>{
 const sel=n==='3*', bg=n==='6'?'':'bg-[#ccffd9]';
 return `<tr class="${h}"><th class="border-b border-r border-[#c0c0c0] p-0 pr-[7px] font-normal ${sel?'bg-[#ffd28c] text-[#5a0050]':'bg-linear-to-r from-white to-[#ebebeb]'}"><span class="ml-1">${n}</span></th>`+
 c.map((v,i)=>`<td class="overflow-hidden border-b border-r p-0 ${i===0?'border-b-[#c0c0c0] border-r-black':'border-[#c0c0c0]'} ${bg} ${i===1?'pl-[3px]':v===edit?'':'pl-px'}">${v}</td>`).join('')+'</tr>';}).join('');

// property table
const props=[['计算设置','按默认计算设置计算'],['节点设置','按默认节点设置计算'],['搭接设置','按默认搭接设置计算'],['顶标高(m)','层顶标高(35.65)'],['底标高(m)','层底标高(32.65)'],['锚固搭接',''],['混凝土强度等级','(C30)'],['抗震等级','(四级抗震)'],['HPB235(A),HPB3','(30)'],['HRB335(B),HRB3','(29/32)'],['HRB400(C),HRB4','(35/39)'],['HRB500(E),HRB5','(43/48)'],['冷轧带肋钢筋锚','(35)'],['冷轧扭钢筋锚固','(35)'],['HPB235(A),HPB3','(42)']];
document.getElementById('propBody').innerHTML=props.map(([k,v],i)=>{
 const group=i===5, last=i===4;
 const name=group?'<div class="flex h-[18px] items-center pl-[2px] text-[#808080]"><span class="grid size-[13px] place-items-center border border-[#a0a0a0]"><i class="h-px w-[7px] bg-black"></i></span><span class="ml-1">'+k+'</span></div>'
  :`<div class="flex h-[18px] pl-2"><span class="${last?'h-[9px]':'h-[18px]'} border-l border-[#b8b8b8]"></span><span class="mt-2 h-px w-[16px] bg-[#b8b8b8]"></span><span class="ml-[5px] h-[18px] overflow-hidden leading-[18px] ${i===6?'text-[#0000ff]':''}">${k}</span></div>`;
 return `<tr class="h-[19px]"><th class="border-b border-r border-[#c0c0c0] bg-linear-to-r from-white to-[#f0f0f0] p-0 font-normal leading-4">${22+i}</th><td class="border-b border-r border-[#c0c0c0] p-0">${name}</td><td class="border-b border-[#c0c0c0] p-0 pl-[2px] leading-4">${v}</td></tr>`;}).join('');

// splitter grips
document.querySelectorAll('[data-grip]').forEach(g=>{
 g.innerHTML='<svg class="block h-[315px] w-3" viewBox="0 0 12 315"><defs><pattern id="dots" width="5" height="5" patternUnits="userSpaceOnUse"><rect x="1" y="1" width="2" height="2" fill="#b4b4b4"/></pattern></defs><rect x="1" y="0" width="10" height="10" rx="1" fill="#e8d0d0" stroke="#703838" stroke-width="1.500"/><path d="M3 3l6 5M9 3L3 8" stroke="#402020"/><rect y="13" width="10" height="302" fill="url(#dots)"/></svg>';});

// half-width runs in dialog-font regions use the fixed-pitch face
document.querySelectorAll('.song').forEach(root=>{
 const w=document.createTreeWalker(root,NodeFilter.SHOW_TEXT), list=[];
 while(w.nextNode()){const p=w.currentNode.parentElement; if(!p.closest('textarea,svg,option,b')&&/[\x21-\x7e]/.test(w.currentNode.data))list.push(w.currentNode);}
 list.forEach(n=>{const s=document.createElement('span'); s.innerHTML=n.data.replace(/[\x21-\x7e][\x20-\x7e]*/g,m=>`<span class="font-[family-name:'DejaVu_Sans_Mono',monospace] text-[10px] leading-none">${m}</span>`); n.replaceWith(s);});
});
</script>
</body>
</html>
